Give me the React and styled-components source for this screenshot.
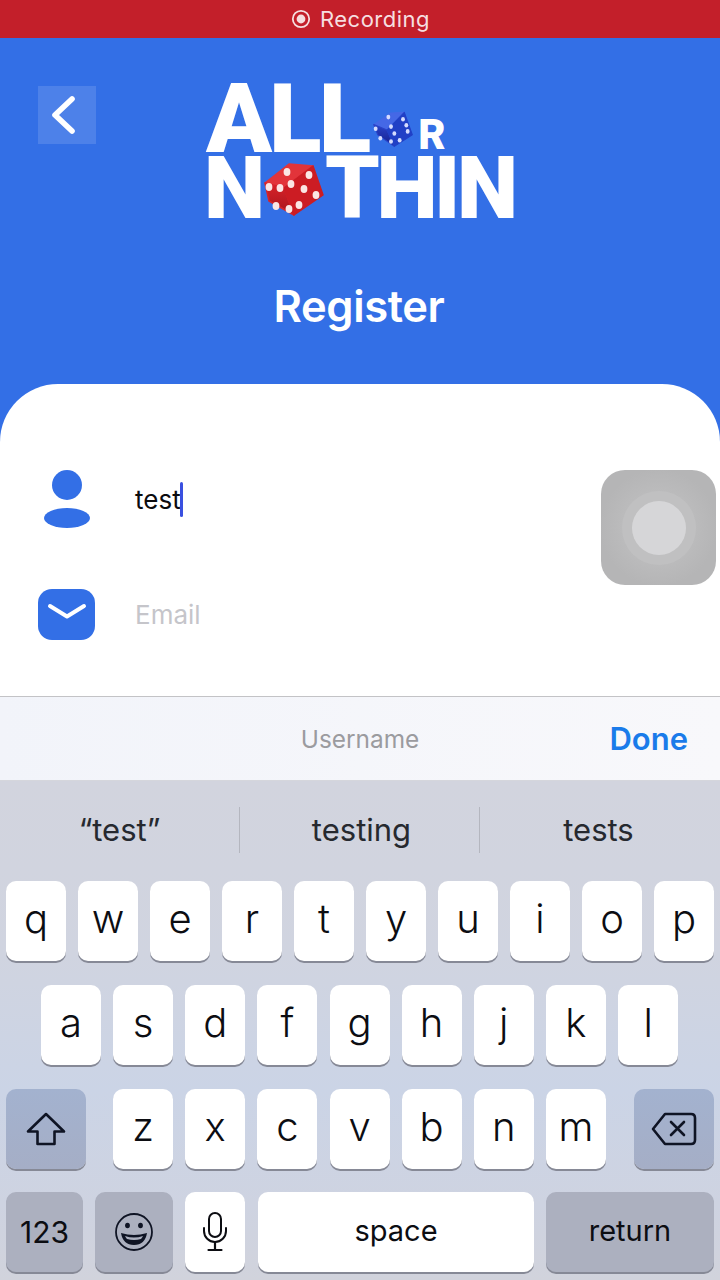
import React from 'react';
import styled, { createGlobalStyle } from 'styled-components';

const Global = createGlobalStyle`
  html, body { margin: 0; padding: 0; background: #336fe6; }
  * { box-sizing: border-box; }
`;

const Screen = styled.div`
  position: relative;
  width: 720px;
  height: 1280px;
  overflow: hidden;
  display: flex;
  flex-direction: column;
  background: #336fe6;
  font-family: Inter, "Liberation Sans", sans-serif;
`;

const RecordingBar = styled.div`
  height: 38px;
  flex: none;
  background: #c31f2a;
  color: #f6dfe0;
  display: flex;
  align-items: center;
  justify-content: center;
  gap: 9px;
  font-size: 22px;
  letter-spacing: 0.5px;
  padding-left: 1px;
`;

const Header = styled.header`
  height: 346px;
  flex: none;
  display: flex;
  flex-direction: column;
  align-items: center;
`;

const TopRow = styled.div`
  width: 100%;
  display: grid;
  grid-template-columns: 1fr auto 1fr;
  padding: 44px 38px 0;
  align-items: start;
`;

const BackButton = styled.button`
  width: 58px;
  height: 58px;
  margin-top: 4px;
  border: 0;
  padding: 0 9px 0 0;
  display: flex;
  align-items: center;
  justify-content: center;
  background: rgba(255, 255, 255, 0.13);
`;

const Logo = styled.div`
  width: 308px;
  display: flex;
  flex-direction: column;
  font-family: Roboto, Inter, sans-serif;
  font-weight: 900;
  color: #fff;
`;

const LogoTop = styled.div`
  height: 75px;
  display: flex;
  align-items: flex-end;
`;

const LogoBottom = styled.div`
  height: 62px;
  margin-left: -2px;
  display: flex;
  align-items: flex-end;
`;

const BigWord = styled.span`
  font-size: 97px;
  line-height: 69px;
  height: 69px;
  margin-bottom: 3px;
  letter-spacing: -3px;
`;

const SmallR = styled.span`
  font-size: 42px;
  line-height: 29px;
  height: 29px;
  margin: 0 0 8px 5px;
`;

const LineWord = styled.span`
  font-size: 87px;
  line-height: 62px;
  height: 62px;
  letter-spacing: ${p => p.$tight}px;
`;

const Title = styled.h1`
  margin: 61px 0 0 -2px;
  color: #fff;
  font-size: 43.5px;
  line-height: 52px;
  font-weight: 600;
  letter-spacing: -0.4px;
`;

const Card = styled.main`
  flex: 1;
  background: #fff;
  border-radius: 58px 58px 0 0;
  padding-top: 57px;
  display: flex;
  flex-direction: column;
`;

const Field = styled.div`
  display: flex;
  align-items: center;
  padding-left: 38px;
  gap: 40px;
  height: ${p => p.$h}px;
`;

const FieldIcon = styled.div`
  width: 57px;
  display: flex;
  justify-content: center;
`;

const FieldValue = styled.div`
  display: flex;
  align-items: center;
  font-size: 26px;
  color: #0b0b0e;
  line-height: 37px;
`;

const Placeholder = styled.div`
  font-size: 26px;
  color: #c5c5ca;
  line-height: 37px;
`;

const Caret = styled.span`
  width: 3px;
  height: 35px;
  background: #3a50e0;
  border-radius: 2px;
  margin-left: -1px;
`;

const AssistiveTouch = styled.div`
  position: absolute;
  left: 601px;
  top: 470px;
  width: 115px;
  height: 115px;
  border-radius: 24px;
  background: radial-gradient(circle at 50% 50%, #bcbcbd 0 40%, #b5b5b6 72%);
  display: flex;
  align-items: center;
  justify-content: center;
`;

const TouchRing = styled.div`
  width: 74px;
  height: 74px;
  border-radius: 50%;
  background: radial-gradient(circle, #c0c0c1 0 76%, #c4c4c5 86%, #bcbcbd 100%);
  display: flex;
  align-items: center;
  justify-content: center;
`;

const TouchDot = styled.div`
  width: 54px;
  height: 54px;
  border-radius: 50%;
  background: #d6d6d8;
`;

const Accessory = styled.div`
  height: 85px;
  flex: none;
  display: grid;
  grid-template-columns: 1fr auto 1fr;
  align-items: center;
  padding: 0 32px;
  background: linear-gradient(90deg, #f2f4fa, #f8f8fb);
  border-top: 1px solid #c3c3c6;
  border-bottom: 1px solid #d5d6dc;
`;

const AccessoryLabel = styled.div`
  grid-column: 2;
  font-size: 24.4px;
  color: #9b9b9f;
`;

const DoneButton = styled.div`
  justify-self: end;
  font-size: 31px;
  font-weight: 600;
  color: #1a7bea;
`;

const Keyboard = styled.section`
  height: 499px;
  flex: none;
  display: flex;
  flex-direction: column;
  background: linear-gradient(180deg, #d2d4de 0%, #d0d4e0 35%, #cbd4e6 62%, #ced3e1 85%, #d1d3dc 100%);
`;

const Suggestions = styled.div`
  height: 100px;
  flex: none;
  display: grid;
  grid-template-columns: 240px 240px 240px;
  align-items: center;
  padding-bottom: 3px;
`;

const Suggestion = styled.div`
  height: 46px;
  display: flex;
  align-items: center;
  justify-content: center;
  font-size: 31px;
  padding-left: ${p => p.$shift || 0}px;
  padding-right: ${p => p.$pull || 0}px;
  color: #26292f;
  border-right: ${p => (p.$last ? '0' : '1px solid #b4b6bf')};
`;

const KeyRows = styled.div`
  display: flex;
  flex-direction: column;
  gap: 24px;
  padding: 0 6px;
`;

const KeyRow = styled.div`
  display: flex;
  justify-content: ${p => p.$justify || 'center'};
  gap: ${p => p.$gap || 12}px;
  margin-left: ${p => p.$nudge || 0}px;
`;

const LetterGroup = styled.div`
  display: flex;
  gap: 12.15px;
  margin-right: 1px;
`;

const Key = styled.div`
  width: ${p => p.$w || 60}px;
  height: 80px;
  flex: none;
  border-radius: 10px;
  background: ${p => (p.$fn === 'blue' ? 'linear-gradient(180deg,#a3b2cf,#a5aec6)' : p.$fn ? '#acb0bf' : '#fff')};
  box-shadow: 0 2px 0 #868996;
  display: flex;
  align-items: center;
  justify-content: center;
  color: #0c0d12;
  font-size: ${p => p.$size || 40}px;
  font-weight: ${p => p.$weight || 350};
  padding-bottom: ${p => p.$lift ?? 6}px;
`;

const RowFour = styled(KeyRow)`
  justify-content: flex-start;
  margin-top: -1px;
`;

const SpaceKey = styled(Key)`
  margin-left: 1px;
`;

const Person = () => (
  <svg width="48" height="58" viewBox="0 0 48 58">
    <circle cx="24" cy="15" r="15" fill="#336fe6" />
    <ellipse cx="24" cy="48" rx="23" ry="10" fill="#336fe6" />
  </svg>
);

const Mail = () => (
  <svg width="57" height="51" viewBox="0 0 57 51">
    <rect width="57" height="51" rx="14" fill="#336fe6" />
    <path d="M12 17 L29 27.5 L46 17" fill="none" stroke="#fff" strokeWidth="4" strokeLinecap="round" strokeLinejoin="round" />
  </svg>
);

const Chevron = () => (
  <svg width="26" height="38" viewBox="0 0 26 38">
    <path d="M22 3 L5 19 L22 35" fill="none" stroke="#fff" strokeWidth="5.6" strokeLinecap="round" strokeLinejoin="round" />
  </svg>
);

const RecordIcon = () => (
  <svg width="20" height="20" viewBox="0 0 20 20">
    <circle cx="10" cy="10" r="8.2" fill="none" stroke="#f6dfe0" strokeWidth="1.8" />
    <circle cx="10" cy="10" r="4.4" fill="#f6dfe0" />
  </svg>
);

const Die = ({ width, height, faces, pips, colors, pip, margin }) => (
  <svg width={width} height={height} viewBox="0 0 60 53" preserveAspectRatio="none" style={{ margin, flex: 'none' }}>
    <defs>
      <linearGradient id={`shade-${colors.id}`} x1="0" y1="0" x2="0" y2="1">
        <stop offset="0" stopColor={colors.left} />
        <stop offset="1" stopColor={colors.deep} />
      </linearGradient>
    </defs>
    <path d={faces.top} fill={colors.top} stroke={colors.top} strokeWidth="1.5" strokeLinejoin="round" />
    <path d={faces.left} fill={`url(#shade-${colors.id})`} stroke={colors.left} strokeWidth="1.5" strokeLinejoin="round" />
    <path d={faces.right} fill={colors.right} stroke={colors.right} strokeWidth="1.5" strokeLinejoin="round" />
    {pips.map(([x, y]) => (
      <ellipse key={`${x}-${y}`} cx={x} cy={y} rx={pip} ry={pip * 1.15} fill={colors.dot} />
    ))}
  </svg>
);

const redDie = {
  pip: 3.4,
  faces: {
    top: 'M1 20 L25 1 L49 3 L20 25 Z',
    left: 'M1 20 L20 25 L30 52 L5 38 Z',
    right: 'M20 25 L49 3 L59 32 L30 52 Z',
  },
  pips: [[23, 9], [5, 24], [16, 25], [12, 43], [25, 46], [27, 21], [45, 12], [40, 26], [52, 32], [35, 42]],
  colors: { id: 'red', top: '#e2343a', left: '#d8232a', deep: '#a8141c', right: '#cc1c23', dot: '#fbe6e4' },
};

const blueDie = {
  pip: 2.9,
  faces: {
    top: 'M1 20 L27 3 L47 2 L21 28 Z',
    left: 'M1 20 L21 28 L32 52 L7 35 Z',
    right: 'M21 28 L47 2 L59 35 L32 52 Z',
  },
  pips: [[4, 26], [23, 9], [45, 12], [27, 23], [32, 33], [50, 21], [52, 30], [40, 43], [11, 40], [27, 45]],
  colors: { id: 'blue', top: '#4568e6', left: '#2a43c8', deep: '#141f8e', right: '#2140c6', dot: '#d5dcff' },
};

const ShiftIcon = () => (
  <svg width="40" height="34" viewBox="0 0 40 34">
    <path d="M20 2 L38 19.5 H28.5 V32 H11.5 V19.5 H2 Z" fill="none" stroke="#0f1424" strokeWidth="2.6" strokeLinejoin="round" />
  </svg>
);

const DeleteIcon = () => (
  <svg width="46" height="34" viewBox="0 0 46 34">
    <path d="M14 2 H40 Q44 2 44 6 V28 Q44 32 40 32 H14 L2 17 Z" fill="none" stroke="#0f1424" strokeWidth="2.6" strokeLinejoin="round" />
    <path d="M20 10 L33 23 M33 10 L20 23" stroke="#0f1424" strokeWidth="2.6" strokeLinecap="round" />
  </svg>
);

const SmileIcon = () => (
  <svg width="40" height="40" viewBox="0 0 40 40">
    <circle cx="20" cy="20" r="18" fill="none" stroke="#0f1424" strokeWidth="1.8" />
    <ellipse cx="13.5" cy="13.5" rx="2.4" ry="2.8" fill="#0f1424" />
    <ellipse cx="26.5" cy="13.5" rx="2.4" ry="2.8" fill="#0f1424" />
    <path d="M7 21 Q20 25 33 21 Q31 33 20 33 Q9 33 7 21 Z" fill="#0f1424" />
    <path d="M11 24 Q20 27 29 24 Q28 26 27 27 Q20 29 13 27 Q12 26 11 24 Z" fill="#acb0bf" />
  </svg>
);

const MicIcon = () => (
  <svg width="26" height="40" viewBox="0 0 26 40">
    <rect x="7" y="1" width="12" height="24" rx="6" fill="none" stroke="#0c0d12" strokeWidth="2" />
    <path d="M2 16 V19 A11 11 0 0 0 24 19 V16" fill="none" stroke="#0c0d12" strokeWidth="2" strokeLinecap="round" />
    <path d="M13 30 V37 M6.5 38 H19.5" stroke="#0c0d12" strokeWidth="2.2" strokeLinecap="round" />
  </svg>
);

const rowOne = 'qwertyuiop'.split('');
const rowTwo = 'asdfghjkl'.split('');
const rowThree = 'zxcvbnm'.split('');

export default function App() {
  return (
    <Screen>
      <Global />
      <RecordingBar><RecordIcon />Recording</RecordingBar>
      <Header>
        <TopRow>
          <BackButton aria-label="Back"><Chevron /></BackButton>
          <Logo>
            <LogoTop>
              <BigWord>ALL</BigWord>
              <Die width={40} height={36} {...blueDie} margin="0 0 10px 5px" />
              <SmallR>R</SmallR>
            </LogoTop>
            <LogoBottom>
              <LineWord $tight={0}>N</LineWord>
              <Die width={60} height={53} {...redDie} margin="0 1px 3px -1px" />
              <LineWord $tight={-3.5}>THIN</LineWord>
            </LogoBottom>
          </Logo>
        </TopRow>
        <Title>Register</Title>
      </Header>
      <Card>
        <Field $h={116}>
          <FieldIcon><Person /></FieldIcon>
          <FieldValue>test<Caret /></FieldValue>
        </Field>
        <Field $h={115}>
          <FieldIcon><Mail /></FieldIcon>
          <Placeholder>Email</Placeholder>
        </Field>
      </Card>
      <AssistiveTouch>
        <TouchRing><TouchDot /></TouchRing>
      </AssistiveTouch>
      <Accessory>
        <AccessoryLabel>Username</AccessoryLabel>
        <DoneButton>Done</DoneButton>
      </Accessory>
      <Keyboard>
        <Suggestions>
          <Suggestion>“test”</Suggestion>
          <Suggestion $shift={4}>testing</Suggestion>
          <Suggestion $last $pull={3}>tests</Suggestion>
        </Suggestions>
        <KeyRows>
          <KeyRow>{rowOne.map(k => <Key key={k}>{k}</Key>)}</KeyRow>
          <KeyRow $gap={12.15} $nudge={-1}>{rowTwo.map(k => <Key key={k}>{k}</Key>)}</KeyRow>
          <KeyRow $justify="space-between">
            <Key $fn="blue" $w={80} $lift={0}><ShiftIcon /></Key>
            <LetterGroup>{rowThree.map(k => <Key key={k}>{k}</Key>)}</LetterGroup>
            <Key $fn="blue" $w={80} $lift={0}><DeleteIcon /></Key>
          </KeyRow>
          <RowFour>
            <Key $fn="grey" $w={77} $size={30} $lift={0} $weight={400}>123</Key>
            <Key $fn="grey" $w={78} $lift={0}><SmileIcon /></Key>
            <Key $w={60} $lift={0}><MicIcon /></Key>
            <SpaceKey $w={276} $size={29} $lift={3} $weight={400}>space</SpaceKey>
            <Key $fn="grey" $w={168} $size={29} $lift={3} $weight={400}>return</Key>
          </RowFour>
        </KeyRows>
      </Keyboard>
    </Screen>
  );
}
